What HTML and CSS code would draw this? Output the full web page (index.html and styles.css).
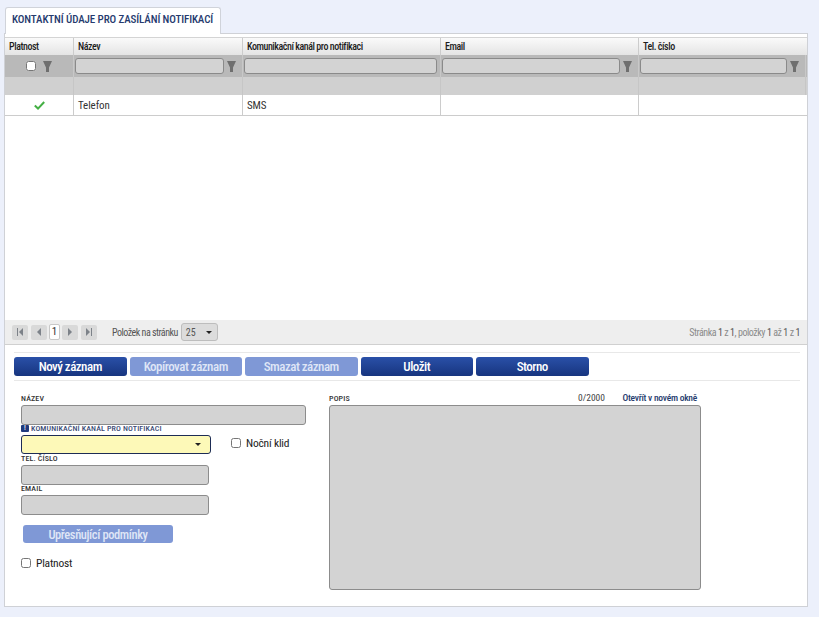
FILE: index.html
```html
<!DOCTYPE html>
<html lang="cs">
  <head>
    <meta charset="UTF-8" />
    <meta name="viewport" content="width=device-width, initial-scale=1.0" />
    <title>Kontaktní údaje pro zasílání notifikací</title>
    <link rel="stylesheet" href="styles.css">
  </head>
  <body>
    <div class="tabs">
      <div class="tab">KONTAKTNÍ ÚDAJE PRO ZASÍLÁNÍ NOTIFIKACÍ</div>
    </div>

    <div class="panel">
      <div class="grid">
        <div class="row head">
          <div class="cell">Platnost</div>
          <div class="cell">Název</div>
          <div class="cell">Komunikační kanál pro notifikaci</div>
          <div class="cell">Email</div>
          <div class="cell">Tel. číslo</div>
        </div>
        <div class="row filters">
          <div class="cell center">
            <input type="checkbox" class="check" />
            <svg class="funnel" viewBox="0 0 9 11"><path d="M0 0h9L6 6.500V11H3V6.500z" /></svg>
          </div>
          <div class="cell"><span class="filter-box"></span><svg class="funnel" viewBox="0 0 9 11"><path d="M0 0h9L6 6.500V11H3V6.500z" /></svg></div>
          <div class="cell no-funnel"><span class="filter-box"></span></div>
          <div class="cell"><span class="filter-box"></span><svg class="funnel" viewBox="0 0 9 11"><path d="M0 0h9L6 6.500V11H3V6.500z" /></svg></div>
          <div class="cell"><span class="filter-box"></span><svg class="funnel" viewBox="0 0 9 11"><path d="M0 0h9L6 6.500V11H3V6.500z" /></svg></div>
        </div>
        <div class="row spacer">
          <div class="cell"></div>
          <div class="cell"></div>
          <div class="cell"></div>
          <div class="cell"></div>
          <div class="cell"></div>
        </div>
        <div class="row data">
          <div class="cell center">
            <svg class="tick" viewBox="0 0 11 9"><path d="M0.800 4.600 4 7.600 10.200 1" /></svg>
          </div>
          <div class="cell">Telefon</div>
          <div class="cell">SMS</div>
          <div class="cell"></div>
          <div class="cell"></div>
        </div>
        <div class="grid-empty"></div>
        <div class="pager">
          <div class="pager-left">
            <span class="page-btn"><svg viewBox="0 0 8 8"><path d="M1 0h1v8H1zM7 0v8L3 4z" /></svg></span>
            <span class="page-btn"><svg viewBox="0 0 8 8"><path d="M6 0v8L2 4z" /></svg></span>
            <span class="page-num">1</span>
            <span class="page-btn"><svg viewBox="0 0 8 8"><path d="M2 0v8l4-4z" /></svg></span>
            <span class="page-btn"><svg viewBox="0 0 8 8"><path d="M6 0h1v8H6zM1 0v8l4-4z" /></svg></span>
            <span class="page-size-label">Položek na stránku</span>
            <span class="page-size">25<i class="caret"></i></span>
          </div>
          <div class="pager-info">Stránka <b>1</b> z <b>1</b>, položky <b>1</b> až <b>1</b> z <b>1</b></div>
        </div>
      </div>

      <div class="toolbar">
        <button class="btn">Nový záznam</button>
        <button class="btn off">Kopírovat záznam</button>
        <button class="btn off">Smazat záznam</button>
        <button class="btn">Uložit</button>
        <button class="btn">Storno</button>
      </div>

      <div class="form">
        <div class="form-left">
          <label class="lbl">NÁZEV</label>
          <div class="field wide"></div>
          <label class="lbl blue"><span class="req">!</span>KOMUNIKAČNÍ KANÁL PRO NOTIFIKACI</label>
          <div class="select-row">
            <div class="field select"><i class="caret"></i></div>
            <label class="chk night"><input type="checkbox" class="check" />Noční klid</label>
          </div>
          <label class="lbl">TEL. ČÍSLO</label>
          <div class="field"></div>
          <label class="lbl gap-up">EMAIL</label>
          <div class="field"></div>
          <button class="btn off small">Upřesňující podmínky</button>
          <label class="chk valid"><input type="checkbox" class="check" />Platnost</label>
        </div>
        <div class="form-right">
          <div class="popis-head">
            <label class="lbl">POPIS</label>
            <span class="counter">0/2000</span>
            <a href="#" class="open-link">Otevřít v novém okně</a>
          </div>
          <div class="field area"></div>
        </div>
      </div>
    </div>
  </body>
</html>
```

FILE: styles.css
```css
body {
  font-family: Roboto, "Liberation Sans", Arial, sans-serif;
  font-stretch: 75%;
  margin: 0;
  height: 617px;
  overflow: hidden;
  background-color: #ecf0fb;
  color: #222;
  font-size: 10px;
}

button {
  font-stretch: inherit;
}

.tabs {
  padding: 7px 0 0 5px;
  height: 26px;
}

.tab {
  box-sizing: border-box;
  width: 216px;
  height: 27px;
  position: relative;
  background-color: #fff;
  border: 1px solid #d0d3da;
  border-bottom: none;
  border-radius: 3px 3px 0 0;
  color: #263b6e;
  font-size: 11px;
  font-weight: 500;
  letter-spacing: -0.1px;
  line-height: 24px;
  padding-left: 6px;
  white-space: nowrap;
}

.panel {
  box-sizing: border-box;
  width: 804px;
  height: 574px;
  margin-left: 4px;
  background-color: #fff;
  border: 1px solid #cfd1d6;
  padding-top: 3px;
}

/* grid */
.row {
  display: grid;
  grid-template-columns: 69px 169px 198px 198px 167px;
}

.cell {
  box-sizing: border-box;
  border-right: 1px solid #ccc;
  display: flex;
  align-items: center;
  padding: 0 4px;
}

.cell:last-child {
  border-right: none;
}

.head {
  height: 18px;
  background: linear-gradient(#fafafa, #e4e4e4);
  border-top: 1px solid #d4d4d4;
  box-sizing: border-box;
  font-weight: 500;
  letter-spacing: -0.45px;
  color: #1d1d1d;
}

.filters {
  height: 22px;
  background-color: #b9b9b9;
}

.filters .cell {
  padding: 0 6px 0 1px;
  border-right: 1px solid #c8c8c8;
}

.filters .no-funnel {
  padding-right: 3px;
}

.filters .center,
.center {
  justify-content: center;
  gap: 7px;
  padding: 0;
}

.filter-box {
  flex: 1;
  height: 16px;
  background-color: #d3d3d3;
  border: 1px solid #8a8a8a;
  border-radius: 3px;
  box-sizing: border-box;
}

.funnel {
  width: 9px;
  height: 11px;
  flex: none;
  fill: #6f6f6f;
}

.cell .filter-box + .funnel {
  margin-left: 3px;
}

.spacer {
  height: 18px;
  background-color: #d0d0d0;
}

.spacer .cell {
  border-right: 1px solid #c6c6c6;
}

.data {
  box-sizing: border-box;
  height: 21px;
  border-bottom: 1px solid #ccc;
  font-size: 11px;
  letter-spacing: -0.1px;
  color: #333;
}

.tick {
  width: 11px;
  height: 9px;
  fill: none;
  stroke: #45b045;
  stroke-width: 2;
}

.grid-empty {
  height: 204px;
}

.pager {
  box-sizing: border-box;
  height: 25px;
  display: flex;
  align-items: center;
  justify-content: space-between;
  background-color: #eeeeee;
  border-bottom: 1px solid #d0d0d0;
  padding: 0 7px;
  color: #555;
}

.pager-left {
  display: flex;
  align-items: center;
  gap: 3px;
}

.page-btn {
  width: 16px;
  height: 15px;
  display: flex;
  align-items: center;
  justify-content: center;
  background-color: #d9d9d9;
  border-radius: 2px;
}

.page-btn svg {
  width: 8px;
  height: 8px;
  fill: #7d8289;
}

.page-num {
  box-sizing: border-box;
  width: 11px;
  height: 16px;
  background-color: #fff;
  border: 1px solid #c8c8c8;
  border-radius: 2px;
  text-align: center;
  line-height: 14px;
  font-size: 11px;
  color: #333;
  margin: 0 -1px;
}

.page-size-label {
  margin-left: 12px;
  letter-spacing: -0.5px;
}

.page-size {
  box-sizing: border-box;
  width: 37px;
  height: 18px;
  padding-left: 4px;
  display: flex;
  align-items: center;
  background-color: #dcdcdc;
  border: 1px solid #bdbdbd;
  border-radius: 3px;
}

.caret {
  width: 0;
  height: 0;
  margin-left: 10px;
  border-left: 3px solid transparent;
  border-right: 3px solid transparent;
  border-top: 3.500px solid #222;
}

.pager-info {
  color: #8a8a8a;
  letter-spacing: -0.45px;
}

.pager-info b {
  color: #555;
  font-weight: 400;
}

/* tlacitka */
.toolbar {
  display: flex;
  gap: 3px;
  margin: 7px 7px 0 9px;
  padding: 4px 0;
  height: 19px;
  border-top: 1px solid #e8e8e8;
  border-bottom: 1px solid #e8e8e8;
}

.btn {
  width: 112.500px;
  height: 19px;
  padding: 0;
  border: none;
  border-radius: 3px;
  background: linear-gradient(#2a50a8, #17357f);
  color: #fff;
  font-family: inherit;
  font-size: 13px;
  font-weight: 500;
  letter-spacing: -0.5px;
}

.off {
  background: #7f98d6;
  color: #dfe6f6;
}

/* formular */
.form {
  display: flex;
  padding: 13px 0 0 16px;
}

.form-left {
  width: 308px;
  display: flex;
  flex-direction: column;
  align-items: flex-start;
}

.lbl {
  font-size: 8px;
  font-weight: 500;
  line-height: 9px;
  letter-spacing: 0.13px;
  color: #333;
  display: block;
  height: 11px;
}

.lbl.gap-up {
  margin-top: -1px;
}

.lbl.blue {
  color: #3a4a75;
  margin: -1px 0 2px;
  height: 9px;
  display: flex;
  align-items: center;
}

.req {
  flex: none;
  width: 8px;
  height: 7px;
  background-color: #1f3a7d;
  color: #fff;
  border-radius: 1px;
  text-align: center;
  line-height: 7px;
  font-size: 7px;
  margin-right: 2px;
}

.field {
  box-sizing: border-box;
  width: 188px;
  height: 20px;
  background-color: #d3d3d3;
  border: 1px solid #8c8c8c;
  border-radius: 3px;
}

.wide {
  width: 285px;
}

.select-row {
  display: flex;
  align-items: flex-start;
}

.select {
  width: 190px;
  height: 19px;
  background-color: #fdf9b8;
  border-color: #1d2c55;
  display: flex;
  align-items: center;
  justify-content: flex-end;
  padding-right: 9px;
}

.chk {
  display: flex;
  align-items: center;
  gap: 5px;
  font-size: 11.500px;
  letter-spacing: -0.2px;
  color: #222;
}

.check {
  width: 10px;
  height: 10px;
  margin: 0;
}

.night {
  margin: 1px 0 0 20px;
}

.small {
  width: 150px;
  height: 18px;
  margin: 10px 0 0 2px;
  font-size: 12.500px;
  letter-spacing: -0.4px;
}

.valid {
  margin-top: 13px;
}

.form-right {
  width: 372px;
}

.popis-head {
  position: relative;
  height: 11px;
}

.counter {
  position: absolute;
  left: 249px;
  top: -2px;
  color: #444;
  font-size: 9.500px;
}

.open-link {
  position: absolute;
  right: 4px;
  top: -2px;
  color: #263b6e;
  font-size: 9.500px;
  font-weight: 500;
  letter-spacing: -0.25px;
  text-decoration: none;
}

.area {
  width: 372px;
  height: 185px;
}
```
